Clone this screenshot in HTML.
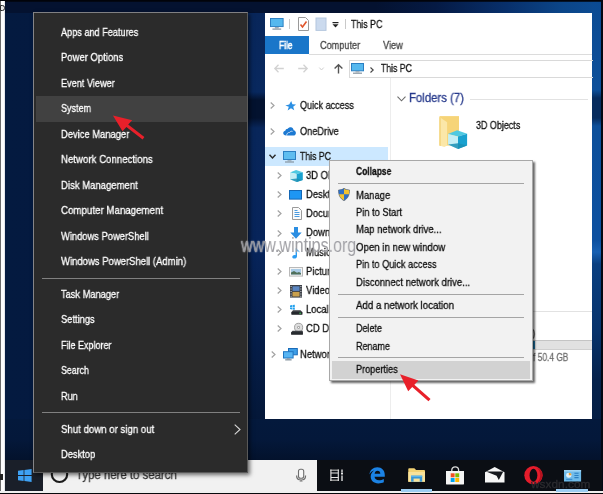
<!DOCTYPE html>
<html><head><meta charset="utf-8">
<style>
html,body{margin:0;padding:0;}
body{width:603px;height:494px;overflow:hidden;position:relative;background:#06173a;font-family:"Liberation Sans",sans-serif;}
.a{position:absolute;}
svg{position:absolute;overflow:visible;}
.t{position:absolute;white-space:nowrap;transform-origin:0 50%;will-change:transform;-webkit-text-stroke:.3px;}
.sepd{position:absolute;left:42px;width:198px;height:1px;background:#808080;}
.sepl{position:absolute;left:338px;width:186px;height:1px;background:#a5a5a5;}
</style></head><body>
<!-- wallpaper -->
<div class="a" style="left:0;top:0;width:603px;height:494px;background:linear-gradient(90deg,#041a40 0%,#04193e 45%,#051c44 75%,#08306a 92%,#0b4a90 98%);"></div>
<div class="a" style="left:248px;top:12px;width:18px;height:448px;background:linear-gradient(180deg,#08265a 0,#08285e 80px,#03122f 88px,#03122f 106px,#08265a 116px,#07245a 240px,#051d48 330px,#04183a 400px,#03142f 448px);"></div>
<div class="a" style="left:5px;top:0;width:598px;height:13px;background:linear-gradient(90deg,#041230 0%,#041230 62%,#051a44 72%,#08306c 84%,#0b4588 93%,#0c4c94 100%);"></div>
<div class="a" style="left:592px;top:0;width:10px;height:460px;background:linear-gradient(180deg,#0b4a92 0,#0d4f9a 90px,#072c5e 98px,#072c5e 118px,#0d4f9a 126px,#0c50a0 240px,#1860b2 252px,#0a3f80 264px,#07336c 330px,#05224c 380px,#041a3c 460px);"></div>
<div class="a" style="left:5px;top:419px;width:596px;height:41px;background:linear-gradient(180deg,#04193c 0,#04183a 50%,#03122c 100%);"></div>
<div class="a" style="left:0;top:0;width:603px;height:2.4px;background:linear-gradient(180deg,#01030a 0,#01030a 1.2px,rgba(2,8,24,0) 2.4px);"></div>
<div class="a" style="left:0;top:0;width:6px;height:494px;background:linear-gradient(90deg,#6a6a6a 0,#6a6a6a .9px,#fdfdfd 1.1px,#fdfdfd 4.4px,rgba(253,253,253,0) 5.4px);"></div>
<div class="a" style="left:0;top:5.3px;width:4.6px;height:5.4px;box-sizing:border-box;border:1.2px solid #2a2a2a;border-left-width:.6px;border-radius:0 2.6px 2.6px 0;background:#e8e8e8;"></div><div class="a" style="left:0;top:0;width:6px;height:1.2px;background:#01030a;"></div>
<div class="a" style="left:0;top:474px;width:3px;height:6px;background:#222;"></div>
<div class="a" style="left:601px;top:0;width:2px;height:494px;background:#030813;"></div>

<!-- explorer window -->
<div class="a" style="left:265.4px;top:12.6px;width:326.7px;height:406.4px;background:#fff;"></div>
<!-- title icons -->
<svg style="left:270px;top:17.5px" width="13.6" height="12.4" viewBox="0 0 14 13" preserveAspectRatio="none"><rect x="0.5" y="0.5" width="13" height="8.5" fill="#55b8ee" stroke="#2b7fc2"/><rect x="5" y="9.5" width="4" height="1.5" fill="#9aa7b2"/><rect x="2.5" y="11" width="9" height="1.3" fill="#8795a1"/></svg>
<div class="a" style="left:289px;top:19px;width:1px;height:10px;background:#c9c9c9;"></div>
<svg style="left:298px;top:17px" width="11" height="14" viewBox="0 0 11 14"><path d="M0.5 0.5H7.5L10.5 3.5V13.5H0.5Z" fill="#fff" stroke="#9a9a9a"/><path d="M2.5 7.5L4.5 10L8.5 4.5" fill="none" stroke="#e0552b" stroke-width="1.6"/></svg>
<svg style="left:316px;top:17.7px" width="10" height="12.4" viewBox="0 0 10 13" preserveAspectRatio="none"><rect x="0" y="0" width="10" height="13" fill="#cbdaee"/><rect x="0" y="0" width="10" height="13" fill="none" stroke="#b4c6de" stroke-width="1"/></svg>
<svg style="left:332px;top:22px" width="7" height="6" viewBox="0 0 7 6"><rect x="0.5" y="0" width="6" height="1.2" fill="#222"/><path d="M0.5 2.3H6.5L3.5 5.4Z" fill="#222"/></svg>
<div class="a" style="left:345px;top:19px;width:1px;height:10px;background:#c9c9c9;"></div>
<!-- ribbon -->
<div class="a" style="left:265.4px;top:36.4px;width:43.2px;height:17.7px;background:#1a76c9;"></div>
<div class="a" style="left:308.5px;top:54px;width:283.5px;height:1px;background:#dcdcdc;"></div>
<!-- nav arrows -->
<svg style="left:274px;top:64px" width="10" height="9" viewBox="0 0 10 9"><path d="M4.5 0.7L0.8 4.5L4.5 8.3M0.8 4.5H9.8" fill="none" stroke="#d2d2d2" stroke-width="1.3"/></svg>
<svg style="left:298px;top:64px" width="10" height="9" viewBox="0 0 10 9"><path d="M5.5 0.7L9.2 4.5L5.5 8.3M9.2 4.5H0.2" fill="none" stroke="#d2d2d2" stroke-width="1.3"/></svg>
<svg style="left:319px;top:66.5px" width="5" height="4" viewBox="0 0 5 4"><path d="M0.3 0.6L2.5 3L4.7 0.6" fill="none" stroke="#cfcfcf" stroke-width="1"/></svg>
<svg style="left:333.5px;top:64px" width="9" height="10" viewBox="0 0 9 10"><path d="M0.6 4.5L4.5 0.8L8.4 4.5M4.5 0.8V9.6" fill="none" stroke="#555" stroke-width="1.4"/></svg>
<div class="a" style="left:348.5px;top:60px;width:244px;height:17.5px;border:1px solid #d9d9d9;box-sizing:border-box;border-right:none;"></div>
<svg style="left:351px;top:63px" width="13" height="11" viewBox="0 0 13 11"><rect x="0.5" y="0.5" width="12" height="7.3" fill="#55b8ee" stroke="#2b7fc2"/><rect x="4.5" y="8.2" width="4" height="1.2" fill="#9aa7b2"/><rect x="2" y="9.6" width="9" height="1.2" fill="#8795a1"/></svg>
<svg style="left:369.5px;top:66.5px" width="4" height="6" viewBox="0 0 4 6"><path d="M0.5 0.5L3.2 3L0.5 5.5" fill="none" stroke="#444" stroke-width="1.1"/></svg>
<!-- nav pane -->
<div class="a" style="left:390px;top:78px;width:1px;height:341px;background:#ededed;"></div>
<div class="a" style="left:265.4px;top:147.1px;width:122.5px;height:18.7px;background:#cce8ff;"></div>
<!-- chevrons -->
<svg style="left:270.3px;top:102.3px" width="5" height="7" viewBox="0 0 5 7"><path d="M0.7 0.5L4 3.5L0.7 6.5" fill="none" stroke="#a3a3a3" stroke-width="1.2"/></svg>
<svg style="left:270.3px;top:128px" width="5" height="7" viewBox="0 0 5 7"><path d="M0.7 0.5L4 3.5L0.7 6.5" fill="none" stroke="#a3a3a3" stroke-width="1.2"/></svg>
<svg style="left:269.3px;top:154.2px" width="7" height="5" viewBox="0 0 7 5"><path d="M0.5 0.7L3.5 4L6.5 0.7" fill="none" stroke="#2a2a2a" stroke-width="1.4"/></svg>
<svg style="left:276.5px;top:172px" width="5" height="7" viewBox="0 0 5 7"><path d="M0.7 0.5L4 3.5L0.7 6.5" fill="none" stroke="#a3a3a3" stroke-width="1.2"/></svg>
<svg style="left:276.5px;top:191.2px" width="5" height="7" viewBox="0 0 5 7"><path d="M0.7 0.5L4 3.5L0.7 6.5" fill="none" stroke="#a3a3a3" stroke-width="1.2"/></svg>
<svg style="left:276.5px;top:210.4px" width="5" height="7" viewBox="0 0 5 7"><path d="M0.7 0.5L4 3.5L0.7 6.5" fill="none" stroke="#a3a3a3" stroke-width="1.2"/></svg>
<svg style="left:276.5px;top:229.5px" width="5" height="7" viewBox="0 0 5 7"><path d="M0.7 0.5L4 3.5L0.7 6.5" fill="none" stroke="#a3a3a3" stroke-width="1.2"/></svg>
<svg style="left:276.5px;top:248.8px" width="5" height="7" viewBox="0 0 5 7"><path d="M0.7 0.5L4 3.5L0.7 6.5" fill="none" stroke="#a3a3a3" stroke-width="1.2"/></svg>
<svg style="left:276.5px;top:267.9px" width="5" height="7" viewBox="0 0 5 7"><path d="M0.7 0.5L4 3.5L0.7 6.5" fill="none" stroke="#a3a3a3" stroke-width="1.2"/></svg>
<svg style="left:276.5px;top:287px" width="5" height="7" viewBox="0 0 5 7"><path d="M0.7 0.5L4 3.5L0.7 6.5" fill="none" stroke="#a3a3a3" stroke-width="1.2"/></svg>
<svg style="left:276.5px;top:306px" width="5" height="7" viewBox="0 0 5 7"><path d="M0.7 0.5L4 3.5L0.7 6.5" fill="none" stroke="#a3a3a3" stroke-width="1.2"/></svg>
<svg style="left:276.5px;top:325px" width="5" height="7" viewBox="0 0 5 7"><path d="M0.7 0.5L4 3.5L0.7 6.5" fill="none" stroke="#a3a3a3" stroke-width="1.2"/></svg>
<svg style="left:270.5px;top:350.5px" width="5" height="7" viewBox="0 0 5 7"><path d="M0.7 0.5L4 3.5L0.7 6.5" fill="none" stroke="#a3a3a3" stroke-width="1.2"/></svg>
<!-- star -->
<svg style="left:285px;top:100.5px" width="11" height="10" viewBox="0 0 11 10"><path d="M6.2 0L7.4 3.3L11 3.5L8.2 5.7L9.2 9.3L6 7.3L2.6 9.5L3.8 5.8L0.3 4.6L4.2 3.6Z" fill="#2b8fe3"/></svg>
<!-- cloud -->
<svg style="left:283px;top:126.5px" width="13" height="9" viewBox="0 0 13 9"><path d="M3.2 8.6C1.4 8.6 0.2 7.5 0.2 6.1C0.2 4.8 1.2 3.9 2.3 3.8C2.5 2.4 3.6 1.6 4.8 1.7C5.5 0.6 6.6 0.1 7.8 0.2C9.5 0.4 10.6 1.7 10.6 3.3C12 3.5 12.9 4.6 12.9 5.9C12.9 7.5 11.7 8.6 10.2 8.6Z" fill="#1c79d2"/><path d="M3.6 8.6C3.6 6.5 5 5.3 6.7 5.4C7.3 4.3 8.6 4 9.6 4.4" fill="none" stroke="#fff" stroke-width=".7"/></svg>
<!-- this pc -->
<svg style="left:283px;top:151px" width="13" height="12" viewBox="0 0 13 12"><rect x="0.5" y="0.5" width="12" height="8" fill="#5ebdf0" stroke="#2b7fc2"/><rect x="4.5" y="9.2" width="4" height="1.1" fill="#9aa7b2"/><rect x="2" y="10.4" width="9" height="1.2" fill="#8795a1"/></svg>
<!-- 3d objects cube -->
<svg style="left:289.7px;top:169.7px" width="12.8" height="12.1" viewBox="9.06 15.3 19.04 18.6" preserveAspectRatio="none"><path d="M9.06 19.1L18.1 15.3L28.1 18.7L19 21.5Z" fill="#4fc9e1"/><path d="M9.06 19.1L19 21.5V33.9L9.06 29.6Z" fill="#c4eef5"/><path d="M28.1 18.7L19 21.5V33.9L28.1 30.6Z" fill="#19a1cf"/><path d="M9.06 29.6L19 28.2L28.1 30.6L19 33.9Z" fill="#1b8fb4" opacity=".85"/></svg>
<!-- desktop -->
<svg style="left:289.3px;top:189.8px" width="13" height="10" viewBox="0 0 13 10"><rect x="0.5" y="0.5" width="12" height="8.6" fill="#1e96f3" stroke="#1467b5"/></svg>
<!-- documents -->
<svg style="left:291.5px;top:207.3px" width="10" height="13" viewBox="0 0 10 13"><path d="M0.5 0.5H6.5L9.5 3.5V12.5H0.5Z" fill="#fbfbfb" stroke="#9b9b9b"/><path d="M2.5 3.5H5.5M2.5 5.5H7.5M2.5 7.5H7.5M2.5 9.5H7.5" stroke="#4a9be0" stroke-width="1"/></svg>
<!-- downloads -->
<svg style="left:290.2px;top:226.6px" width="12" height="12" viewBox="0 0 12 12"><path d="M4 0H8V5.4H11.7L6 11.8L0.3 5.4H4Z" fill="#2b8ee2"/></svg>
<!-- music -->
<svg style="left:292px;top:247.8px" width="9" height="11" viewBox="0 0 9 11"><path d="M3.6 0.2H5V1C5.5 2.3 7.6 2.6 7.8 4.8C7.2 3.6 6 3.4 5 3.3V8.3C5 9.8 3.8 10.6 2.5 10.6C1.2 10.6 0.3 9.9 0.3 8.9C0.3 7.8 1.4 7 2.6 7C3 7 3.3 7.1 3.6 7.2Z" fill="#2b9cf2"/></svg>
<!-- pictures -->
<svg style="left:289px;top:266.5px" width="14" height="10" viewBox="0 0 14 10"><rect x="0.5" y="0.5" width="13" height="8.6" fill="#f4f4f4" stroke="#b9b9b9"/><rect x="2" y="2" width="10" height="5.6" fill="#a9cbe6"/><path d="M2 7.6V5.6L5 4L8 5.8L10 5L12 6.2V7.6Z" fill="#50705a"/></svg>
<!-- videos -->
<svg style="left:290.2px;top:284.8px" width="12" height="13" viewBox="0 0 12 13"><rect x="0" y="0" width="12" height="12.6" fill="#3d4148"/><rect x="2.5" y="1.3" width="7" height="4.6" fill="#5b86c2"/><rect x="2.5" y="6.9" width="7" height="4.6" fill="#c9a04c"/><path d="M0.6 1.5H1.6M0.6 4H1.6M0.6 6.5H1.6M0.6 9H1.6M0.6 11.3H1.6M10.4 1.5H11.4M10.4 4H11.4M10.4 6.5H11.4M10.4 9H11.4M10.4 11.3H11.4" stroke="#cfd3d8" stroke-width="1"/></svg>
<!-- local disk -->
<svg style="left:289.5px;top:305px" width="13" height="10" viewBox="0 0 13 10"><path d="M0 0.4L2 0.1V2H0ZM2.5 0L4.8 -0.3V2H2.5ZM0 2.5H2V4.4L0 4.1ZM2.5 2.5H4.8V4.8L2.5 4.5Z" fill="#21a0ee"/><path d="M3 5.2H10.5L12.3 7V9.6H1.5V7Z" fill="#3a3d42"/><rect x="1.5" y="7" width="10.8" height="2.6" fill="#25282c"/><rect x="9.3" y="7.7" width="1.8" height="1" fill="#41c75a"/></svg>
<!-- cd drive -->
<svg style="left:290.5px;top:322.5px" width="12" height="12" viewBox="0 0 12 12"><circle cx="7.6" cy="4.4" r="4.1" fill="#dcdcdc" stroke="#8f8f8f" stroke-width=".8"/><circle cx="7.6" cy="4.4" r="1.4" fill="#9a9a9a"/><circle cx="7.6" cy="4.4" r=".6" fill="#fff"/><path d="M1.5 7.8H11.8V11.6H0.2V9.2Z" fill="#3a3d42"/><rect x="0.2" y="9.2" width="11.6" height="2.4" fill="#26292d"/></svg>
<!-- network -->
<svg style="left:283px;top:348.3px" width="15" height="13" viewBox="0 0 15 13"><rect x="5.5" y="0.5" width="8.8" height="6.3" fill="#3d9de6" stroke="#1a6bb8"/><rect x="0.5" y="3.7" width="9.6" height="6.3" fill="#57b4f2" stroke="#1f74c0"/><rect x="3.8" y="10.3" width="3" height="1" fill="#8795a1"/><rect x="2.2" y="11.3" width="6.4" height="1.1" fill="#6f7f8c"/></svg>

<!-- content -->
<svg style="left:397px;top:95.5px" width="9" height="6" viewBox="0 0 9 6"><path d="M0.5 0.7L4.5 4.8L8.5 0.7" fill="none" stroke="#6b6b6b" stroke-width="1.1"/></svg>
<div class="a" style="left:469.5px;top:98.5px;width:118.5px;height:1px;background:#e2e2e2;"></div>
<svg style="left:439px;top:115px" width="30" height="34" viewBox="0 0 30 34"><path d="M0.5 1.1H20V30.6H0.5Z" fill="#f6d478"/><path d="M0.5 2L8.1 7.3V30.6L5.3 32L0.5 30.6Z" fill="#fbe7a8"/><path d="M0.5 2V30.6L1.6 30.9V2.8Z" fill="#f2cf70"/><path d="M9.06 19.1L18.1 15.3L28.1 18.7L19 21.5Z" fill="#4fc9e1"/><path d="M9.06 19.1L19 21.5V33.9L9.06 29.6Z" fill="#c4eef5"/><path d="M28.1 18.7L19 21.5V33.9L28.1 30.6Z" fill="#19a1cf"/><path d="M9.06 29.6L19 28.2L28.1 30.6L19 33.9Z" fill="#1b8fb4" opacity=".85"/></svg>
<!-- drives partial -->
<div class="a" style="left:532px;top:311px;width:60px;height:1px;background:#e2e2e2;"></div>
<div class="a" style="left:532px;top:340.3px;width:60px;height:9.3px;background:#e1e1e1;border-top:1px solid #c4c4c4;border-bottom:1px solid #cfcfcf;box-sizing:border-box;"></div>
<div class="a" style="left:532px;top:341.2px;width:2.8px;height:7.6px;background:#1f7fb5;"></div>
<div class="t" style="left:351.1px;top:16.9px;font-size:11px;line-height:14px;height:14px;color:#111;transform:scaleX(0.8026);">This PC</div>
<div class="t" style="left:279.3px;top:38.2px;font-size:11px;line-height:14px;height:14px;color:#fff;transform:scaleX(0.7669);-webkit-text-stroke:.55px;">File</div>
<div class="t" style="left:319.8px;top:38.2px;font-size:11px;line-height:14px;height:14px;color:#444;transform:scaleX(0.8303);">Computer</div>
<div class="t" style="left:383.3px;top:38.2px;font-size:11px;line-height:14px;height:14px;color:#444;transform:scaleX(0.8370);">View</div>
<div class="t" style="left:380.8px;top:61.2px;font-size:11px;line-height:14px;height:14px;color:#111;transform:scaleX(0.7872);">This PC</div>
<div class="t" style="left:299.8px;top:98.1px;font-size:11px;line-height:14px;height:14px;color:#111;transform:scaleX(0.8224);">Quick access</div>
<div class="t" style="left:299.8px;top:123.6px;font-size:11px;line-height:14px;height:14px;color:#111;transform:scaleX(0.8350);">OneDrive</div>
<div class="t" style="left:300.2px;top:148.6px;font-size:11px;line-height:14px;height:14px;color:#111;transform:scaleX(0.7898);">This PC</div>
<div class="t" style="left:306.4px;top:167.9px;font-size:11px;line-height:14px;height:14px;color:#111;transform:scaleX(0.8600);">3D Objects</div>
<div class="t" style="left:306.4px;top:187.2px;font-size:11px;line-height:14px;height:14px;color:#111;transform:scaleX(0.8600);">Desktop</div>
<div class="t" style="left:306.4px;top:206.4px;font-size:11px;line-height:14px;height:14px;color:#111;transform:scaleX(0.8600);">Documents</div>
<div class="t" style="left:306.4px;top:225.4px;font-size:11px;line-height:14px;height:14px;color:#111;transform:scaleX(0.8600);">Downloads</div>
<div class="t" style="left:306.4px;top:244.9px;font-size:11px;line-height:14px;height:14px;color:#111;transform:scaleX(0.8600);">Music</div>
<div class="t" style="left:306.4px;top:264.0px;font-size:11px;line-height:14px;height:14px;color:#111;transform:scaleX(0.8600);">Pictures</div>
<div class="t" style="left:306.4px;top:282.9px;font-size:11px;line-height:14px;height:14px;color:#111;transform:scaleX(0.8600);">Videos</div>
<div class="t" style="left:306.4px;top:301.8px;font-size:11px;line-height:14px;height:14px;color:#111;transform:scaleX(0.8600);">Local Disk (C:)</div>
<div class="t" style="left:306.4px;top:320.9px;font-size:11px;line-height:14px;height:14px;color:#111;transform:scaleX(0.8600);">CD Drive (D:)</div>
<div class="t" style="left:299.9px;top:346.6px;font-size:11px;line-height:14px;height:14px;color:#111;transform:scaleX(0.8600);">Network</div>
<div class="t" style="left:408.6px;top:89.9px;font-size:12px;line-height:16px;height:16px;color:#273a8c;transform:scaleX(0.9480);">Folders (7)</div>
<div class="t" style="left:475.8px;top:118.2px;font-size:11px;line-height:14px;height:14px;color:#111;transform:scaleX(0.8140);">3D Objects</div>
<div class="t" style="left:532.9px;top:349.9px;font-size:10.5px;line-height:14px;height:14px;color:#6d6d6d;transform:scaleX(0.7980);">f 50.4 GB</div>
<div class="t" style="left:531.9px;top:325.6px;font-size:11px;line-height:14px;height:14px;color:#333;transform:scaleX(0.8600);">)</div>

<!-- context menu -->
<div class="a" style="left:329px;top:159.5px;width:203.5px;height:221px;background:#f2f2f2;box-sizing:border-box;border:1px solid #a8a8a8;box-shadow:1.5px 1.5px 2px rgba(0,0,0,.6);"></div>
<div class="a" style="left:331.5px;top:360.5px;width:198.5px;height:18px;background:#d2d2d2;"></div>
<div class="sepl" style="top:182.5px;"></div>
<div class="sepl" style="top:293.5px;"></div>
<div class="sepl" style="top:316.5px;"></div>
<div class="sepl" style="top:357px;"></div>
<svg style="left:337.5px;top:188px" width="12" height="13" viewBox="0 0 12 13"><path d="M6 0.3C4.3 1.6 2.3 2 0.5 2C0.5 7 2 10.5 6 12.7C10 10.5 11.5 7 11.5 2C9.7 2 7.7 1.6 6 0.3Z" fill="#2f6fc4" stroke="#5a5a5a" stroke-width=".6"/><path d="M6 0.8V6.3H1.1C0.8 5 0.8 3.5 0.8 2.3C2.6 2.2 4.5 1.8 6 0.8Z" fill="#2f6fc4"/><path d="M6 0.8C7.5 1.8 9.4 2.2 11.2 2.3C11.2 3.5 11.2 5 10.9 6.3H6Z" fill="#f2c22e"/><path d="M1.1 6.3H6V12.3C3.2 10.8 1.7 8.8 1.1 6.3Z" fill="#f2c22e"/></svg>
<div class="t" style="left:356.1px;top:164.2px;font-size:11px;line-height:14px;height:14px;color:#0e0e0e;transform:scaleX(0.7697);font-weight:bold;">Collapse</div>
<div class="t" style="left:356.1px;top:187.6px;font-size:11px;line-height:14px;height:14px;color:#0e0e0e;transform:scaleX(0.8600);">Manage</div>
<div class="t" style="left:356.1px;top:204.6px;font-size:11px;line-height:14px;height:14px;color:#0e0e0e;transform:scaleX(0.8452);">Pin to Start</div>
<div class="t" style="left:356.1px;top:222.1px;font-size:11px;line-height:14px;height:14px;color:#0e0e0e;transform:scaleX(0.8632);">Map network drive...</div>
<div class="t" style="left:356.1px;top:239.7px;font-size:11px;line-height:14px;height:14px;color:#0e0e0e;transform:scaleX(0.8787);">Open in new window</div>
<div class="t" style="left:356.1px;top:257.2px;font-size:11px;line-height:14px;height:14px;color:#0e0e0e;transform:scaleX(0.8355);">Pin to Quick access</div>
<div class="t" style="left:356.1px;top:274.8px;font-size:11px;line-height:14px;height:14px;color:#0e0e0e;transform:scaleX(0.8640);">Disconnect network drive...</div>
<div class="t" style="left:356.1px;top:297.8px;font-size:11px;line-height:14px;height:14px;color:#0e0e0e;transform:scaleX(0.8805);">Add a network location</div>
<div class="t" style="left:356.1px;top:321.0px;font-size:11px;line-height:14px;height:14px;color:#0e0e0e;transform:scaleX(0.8145);">Delete</div>
<div class="t" style="left:356.1px;top:338.6px;font-size:11px;line-height:14px;height:14px;color:#0e0e0e;transform:scaleX(0.8153);">Rename</div>
<div class="t" style="left:356.1px;top:361.6px;font-size:11px;line-height:14px;height:14px;color:#0e0e0e;transform:scaleX(0.8317);">Properties</div>

<!-- taskbar -->
<div class="a" style="left:4.5px;top:459.5px;width:597px;height:31px;background:#0b0e14;"></div>
<div class="a" style="left:4.5px;top:459.5px;width:38.5px;height:31px;background:#1a1f29;"></div>
<svg style="left:18px;top:469px" width="14" height="13" viewBox="0 0 14 13"><path d="M0 1.8L5.6 1V6.1H0ZM6.4 0.9L13.6 0V6.1H6.4ZM0 6.9H5.6V12L0 11.2ZM6.4 6.9H13.6V13L6.4 12.1Z" fill="#3ea1f4"/></svg>
<div class="a" style="left:43px;top:459.5px;width:274px;height:31px;background:#f1f1f1;"></div>
<svg style="left:50px;top:465px" width="19" height="19" viewBox="0 0 19 19"><circle cx="9.5" cy="9.3" r="7.7" fill="none" stroke="#1c1c1c" stroke-width="2.1"/></svg>
<div class="t" style="left:75.6px;top:466.1px;font-size:13.5px;line-height:18px;height:18px;color:#333;transform:scaleX(0.8447);">Type here to search</div>
<!-- mic -->
<svg style="left:296px;top:468px" width="11" height="15" viewBox="0 0 11 15"><rect x="2.5" y="1.2" width="5.2" height="9" rx="2" fill="#f7f7f7" stroke="#6e6e6e" stroke-width="1.1"/><path d="M0.6 7.4C0.6 10.4 2.6 12 5.1 12C7.6 12 9.6 10.4 9.6 7.4" fill="none" stroke="#6e6e6e" stroke-width="1.2"/><path d="M3.4 13.6L5.1 12L6.8 13.6Z" fill="#6e6e6e"/></svg>
<!-- task view -->
<svg style="left:330px;top:469px" width="14" height="13" viewBox="0 0 14 13"><path d="M0.3 1.3H8.9M0.3 11.2H8.9" stroke="#8d8d8d" stroke-width="1.5" fill="none"/><path d="M0.9 0.5V12M8.3 0.5V12" stroke="#e6e6e6" stroke-width="1.1" fill="none"/><path d="M0.9 4H8.3M0.9 8.5H8.3" stroke="#e6e6e6" stroke-width="1.1" fill="none"/><path d="M12 0.5V3.2M12 6.6V12" stroke="#cfcfcf" stroke-width="1.5"/><rect x="11.1" y="3.6" width="1.8" height="1.9" fill="#fff"/></svg>
<!-- edge -->
<svg style="left:369.3px;top:467.3px" width="16" height="16.6" viewBox="0 0 15 16" preserveAspectRatio="none"><path d="M0.4 7.2C0.8 3 3.8 0.2 7.8 0.2C12 0.2 14.8 3.2 14.8 7.6V9.4H5.2C5.4 11.6 7 12.8 9.4 12.8C11 12.8 12.6 12.3 13.9 11.5V14.7C12.5 15.4 10.7 15.8 8.8 15.8C4.4 15.8 1.6 13.1 1.6 9.2C1.6 6.6 3 4.5 5 3.4C3 3.8 1.3 5.2 0.4 7.2ZM5.3 6.4H10.6C10.6 4.6 9.6 3.5 8 3.5C6.5 3.5 5.5 4.7 5.3 6.4Z" fill="#1b82e4"/></svg>
<!-- file explorer -->
<svg style="left:407.5px;top:468px" width="17.3" height="14" viewBox="0 0 18 15" preserveAspectRatio="none"><path d="M0.3 1.2C0.3 0.7 0.7 0.3 1.2 0.3H6.6L8.4 2.2H16.8C17.3 2.2 17.7 2.6 17.7 3.1V14.7H0.3Z" fill="#f4d374"/><path d="M0.3 4.3H17.7V14.7H0.3Z" fill="#f9e29a"/><path d="M3.2 8.2H14.8V14.7H3.2Z" fill="#3a97d6"/><path d="M5.8 11.3H12.2V14.7H5.8Z" fill="#f9e29a"/><path d="M3.2 8.2H14.8V9.6H3.2Z" fill="#5db6ee"/></svg>
<!-- store -->
<svg style="left:446px;top:465.8px" width="18" height="19" viewBox="0 0 18 19"><path d="M5.8 5.6V4C5.8 2.2 7.2 0.8 9.2 0.8C11.2 0.8 12.6 2.2 12.6 4V5.6" fill="none" stroke="#dcdcdc" stroke-width="1.3"/><path d="M0 5.1H18V17.4Q18 18.6 16.8 18.6H1.2Q0 18.6 0 17.4Z" fill="#f4f4f4"/><rect x="4.7" y="7.3" width="3.9" height="4" fill="#f25022"/><rect x="9.3" y="7.3" width="3.9" height="4" fill="#7fba00"/><rect x="4.7" y="12" width="3.9" height="4" fill="#00a4ef"/><rect x="9.3" y="12" width="3.9" height="4" fill="#ffb900"/></svg>
<!-- mail -->
<svg style="left:484.7px;top:467.3px" width="19.5" height="15.5" viewBox="0 0 19.5 15.5"><path d="M0 5.3L9.7 0L19.5 5.3V15.5H0Z" fill="#f6f6f6"/><path d="M1 4.5H18.3L13.8 13L11.6 8.8Z" fill="#14171c"/></svg>
<!-- opera -->
<svg style="left:523.8px;top:466.1px" width="18.9" height="18.4" viewBox="0 0 18 18" preserveAspectRatio="none"><ellipse cx="9" cy="9" rx="8.7" ry="8.9" fill="#e51c2b"/><ellipse cx="9" cy="9" rx="3.7" ry="6.3" fill="#0b0e14"/><path d="M11.6 1.4C14 2.8 15.4 5.6 15.4 9C15.4 12.4 14 15.2 11.6 16.6C15 15.6 17.7 12.6 17.7 9C17.7 5.4 15 2.4 11.6 1.4Z" fill="#b5121f"/></svg>
<!-- control panel -->
<svg style="left:563.9px;top:469.5px" width="17.1" height="11.5" viewBox="0 0 16.4 11.8" preserveAspectRatio="none"><rect x="0" y="0" width="16.4" height="11.8" fill="#6fbbea"/><rect x="0" y="0" width="16.4" height="1.6" fill="#9fd4f4"/><circle cx="4.6" cy="5.4" r="2.5" fill="#e6f2fa"/><path d="M4.6 5.4V2.9A2.5 2.5 0 0 1 7.1 5.4Z" fill="#f0a030"/><path d="M10 3.4H14M10 5.6H14M10 7.8H14" stroke="#2d7fc0" stroke-width="1.1"/><rect x="2" y="9" width="6" height="1.4" fill="#3a8fd0"/></svg>

<div class="a" style="left:0;top:490.5px;width:603px;height:2.1px;background:#efefef;"></div>
<div class="a" style="left:400.5px;top:489.3px;width:31.3px;height:3px;background:#9ccdf2;"></div>
<div class="a" style="left:556.4px;top:489.3px;width:31.5px;height:3px;background:#9ccdf2;"></div>
<div class="a" style="left:0;top:492.6px;width:603px;height:1.4px;background:#07090c;"></div>
<div class="t" style="left:531.4px;top:477.1px;font-size:10.5px;line-height:14px;height:14px;color:rgba(44,44,48,.95);transform:scaleX(1.1311);">wsxdn.com</div>

<!-- win+x menu -->
<div class="a" style="left:33.4px;top:12px;width:215px;height:461.4px;background:#2b2b2b;box-sizing:border-box;border:1px solid #595959;border-left-color:#858588;border-top-color:#808083;box-shadow:2px 2px 4px rgba(0,0,0,.55);"></div>
<div class="a" style="left:36px;top:96px;width:210.5px;height:25.5px;background:#414141;"></div>
<div class="sepd" style="top:277.5px;"></div>
<div class="sepd" style="top:412px;"></div>
<svg style="left:233.5px;top:423.5px" width="7" height="11" viewBox="0 0 7 11"><path d="M0.7 0.6L6 5.5L0.7 10.4" fill="none" stroke="#d8d8d8" stroke-width="1.1"/></svg>
<div class="t" style="left:61.1px;top:24.6px;font-size:11px;line-height:14px;height:14px;color:#fff;transform:scaleX(0.8316);">Apps and Features</div>
<div class="t" style="left:61.1px;top:50.1px;font-size:11px;line-height:14px;height:14px;color:#fff;transform:scaleX(0.8620);">Power Options</div>
<div class="t" style="left:61.1px;top:75.6px;font-size:11px;line-height:14px;height:14px;color:#fff;transform:scaleX(0.8311);">Event Viewer</div>
<div class="t" style="left:61.1px;top:101.1px;font-size:11px;line-height:14px;height:14px;color:#fff;transform:scaleX(0.8204);">System</div>
<div class="t" style="left:61.1px;top:126.6px;font-size:11px;line-height:14px;height:14px;color:#fff;transform:scaleX(0.8528);">Device Manager</div>
<div class="t" style="left:61.1px;top:152.1px;font-size:11px;line-height:14px;height:14px;color:#fff;transform:scaleX(0.8779);">Network Connections</div>
<div class="t" style="left:61.1px;top:177.6px;font-size:11px;line-height:14px;height:14px;color:#fff;transform:scaleX(0.8663);">Disk Management</div>
<div class="t" style="left:61.1px;top:203.1px;font-size:11px;line-height:14px;height:14px;color:#fff;transform:scaleX(0.8835);">Computer Management</div>
<div class="t" style="left:61.1px;top:228.6px;font-size:11px;line-height:14px;height:14px;color:#fff;transform:scaleX(0.8497);">Windows PowerShell</div>
<div class="t" style="left:61.1px;top:253.9px;font-size:11px;line-height:14px;height:14px;color:#fff;transform:scaleX(0.8641);">Windows PowerShell (Admin)</div>
<div class="t" style="left:61.1px;top:286.9px;font-size:11px;line-height:14px;height:14px;color:#fff;transform:scaleX(0.8423);">Task Manager</div>
<div class="t" style="left:61.1px;top:312.4px;font-size:11px;line-height:14px;height:14px;color:#fff;transform:scaleX(0.8453);">Settings</div>
<div class="t" style="left:61.1px;top:337.9px;font-size:11px;line-height:14px;height:14px;color:#fff;transform:scaleX(0.8178);">File Explorer</div>
<div class="t" style="left:61.1px;top:363.4px;font-size:11px;line-height:14px;height:14px;color:#fff;transform:scaleX(0.8004);">Search</div>
<div class="t" style="left:61.1px;top:389.1px;font-size:11px;line-height:14px;height:14px;color:#fff;transform:scaleX(0.8272);">Run</div>
<div class="t" style="left:61.1px;top:421.6px;font-size:11px;line-height:14px;height:14px;color:#fff;transform:scaleX(0.8768);">Shut down or sign out</div>
<div class="t" style="left:61.1px;top:447.2px;font-size:11px;line-height:14px;height:14px;color:#fff;transform:scaleX(0.8499);">Desktop</div>

<div class="t" style="left:241.2px;top:232.9px;font-size:19.6px;line-height:25px;height:25px;color:rgba(140,140,146,.85);transform:scaleX(0.8208);-webkit-text-stroke:0;text-shadow:0 0 1px rgba(255,255,255,.8),0 0 2px rgba(255,255,255,.4);">www.wintips.org</div>
<!-- red arrows -->
<svg style="left:0;top:0" width="603" height="494" viewBox="0 0 603 494">
<g fill="#e8202a" stroke="none">
<path d="M112.96 115.4L132.2 120.2L128.2 124.5L144.4 137.1L142.6 139.5L126.4 126.9L122.5 131.2Z"/>
<path d="M400 374.2L418.4 380.6L414.36 384.7L430.56 398.9L428.44 401.3L412.24 387.1L408.2 391.2Z"/>
</g></svg>
</body></html>
